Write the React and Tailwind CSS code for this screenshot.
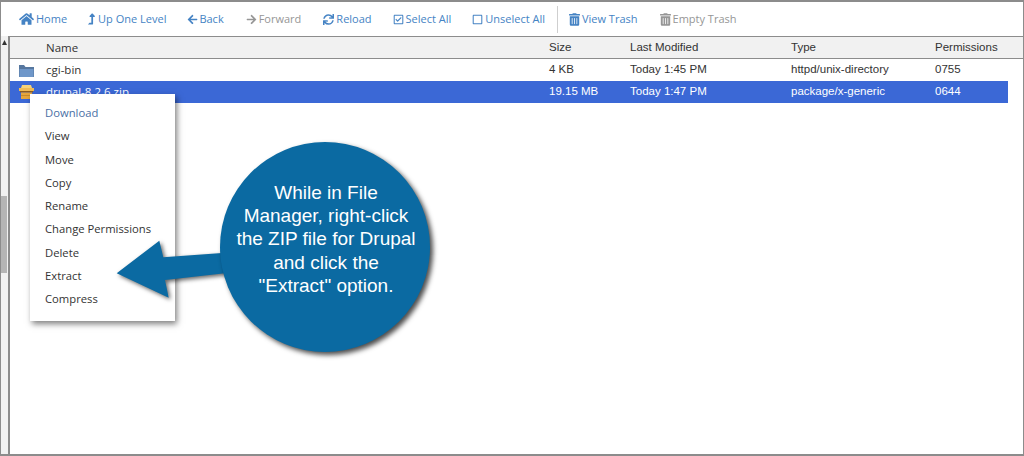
import { FaHome, FaLevelUpAlt, FaArrowLeft, FaArrowRight, FaSync, FaRegCheckSquare, FaRegSquare, FaTrashAlt } from 'react-icons/fa'

const TOOLS = [
  { label: 'Home', icon: FaHome, size: 'w-[15px] h-[14px]', ml: 'ml-[18px]', gap: 'gap-[2px]' },
  { label: 'Up One Level', icon: FaLevelUpAlt, size: 'w-[7px] h-[12px]', ml: 'ml-[21px]', gap: 'gap-[3px]' },
  { label: 'Back', icon: FaArrowLeft, size: 'w-[11px] h-[11px]', ml: 'ml-[21px]', gap: 'gap-[1px]' },
  { label: 'Forward', icon: FaArrowRight, size: 'w-[11px] h-[11px]', ml: 'ml-[22px]', gap: 'gap-[2px]', muted: true },
  { label: 'Reload', icon: FaSync, size: 'w-[11px] h-[11px]', ml: 'ml-[22px]', gap: 'gap-[2px]' },
  { label: 'Select All', icon: FaRegCheckSquare, size: 'w-[11px] h-[11px]', ml: 'ml-[21px]', gap: 'gap-[2px]' },
  { label: 'Unselect All', icon: FaRegSquare, size: 'w-[11px] h-[11px]', ml: 'ml-[21px]', gap: 'gap-[2px]' },
]

const MENU = ['Download', 'View', 'Move', 'Copy', 'Rename', 'Change Permissions', 'Delete', 'Extract', 'Compress']

function Tool({ label, icon: Icon, size, ml, gap, muted }) {
  return (
    <span className={`flex items-center ${gap} ${ml} ${muted ? 'text-[#969696]' : 'text-[#4583c4]'}`}>
      <Icon className={size} />
      <span>{label}</span>
    </span>
  )
}

function FolderIcon() {
  return (
    <svg width="15" height="14" viewBox="0 0 15 14">
      <path d="M0 1 L5 1 L6.5 3 L15 3 L15 13 L0 13 Z" fill="#56779f" />
      <rect x="0.5" y="5" width="14" height="8" fill="#6f97c9" />
    </svg>
  )
}

function PackageIcon() {
  return (
    <svg width="15" height="14" viewBox="0 0 15 14">
      <path d="M3 0 H12 L13 3 H2 Z" fill="#f6d27a" />
      <rect x="0" y="3" width="15" height="3" fill="#f0bb55" />
      <rect x="1" y="6" width="13" height="1.5" fill="#8a5a1e" />
      <rect x="2" y="7.5" width="11" height="6.5" fill="#e7a63c" />
      <rect x="2" y="10" width="11" height="1" fill="#c58a2c" />
    </svg>
  )
}

export default function App() {
  return (
    <div className="relative w-[1024px] h-[456px] overflow-hidden bg-white border-y-2 border-x border-[#8c8c8c] flex flex-col font-['Open_Sans',sans-serif]">
      <div className="h-[34px] shrink-0 flex items-center text-[11px]">
        {TOOLS.map(t => <Tool key={t.label} {...t} />)}
        <span className="w-px h-[27px] bg-[#cfcfcf] ml-[12px]" />
        <Tool label="View Trash" icon={FaTrashAlt} size="w-[11px] h-[13px]" ml="ml-[11px]" gap="gap-[2px]" />
        <Tool label="Empty Trash" icon={FaTrashAlt} size="w-[11px] h-[13px]" ml="ml-[22px]" gap="gap-[2px]" muted />
      </div>

      <div className="flex flex-1 min-h-0">
        <div className="w-[7px] shrink-0 bg-[#f1f1f1] flex flex-col">
          <svg className="mt-[4px] ml-[1px]" width="5" height="5" viewBox="0 0 5 5">
            <path d="M2.5 0 L5 5 L0 5 Z" fill="#333" />
          </svg>
          <div className="mt-[151px] w-[6px] h-[77px] bg-[#b5b5b5]" />
        </div>
        <div className="flex-1 border-l-2 border-[#8c8c8c] text-[11.5px] font-['Liberation_Sans',sans-serif] text-[#333]">
          <div className="flex items-center h-[23px] bg-[#f1f1f1] border-y border-[#8c8c8c]">
            <span className="w-[539px] pl-[36px] font-['Open_Sans',sans-serif] text-[11.5px]">Name</span>
            <span className="w-[81px]">Size</span>
            <span className="w-[161px]">Last Modified</span>
            <span className="w-[144px]">Type</span>
            <span>Permissions</span>
          </div>
          <div className="flex items-center h-[22px] w-[998px]">
            <span className="w-[36px] pl-[9px] pt-[2px] flex items-center"><FolderIcon /></span>
            <span className="w-[503px] font-['Open_Sans',sans-serif] text-[11.5px]">cgi-bin</span>
            <span className="w-[81px]">4 KB</span>
            <span className="w-[161px]">Today 1:45 PM</span>
            <span className="w-[144px]">httpd/unix-directory</span>
            <span>0755</span>
          </div>
          <div className="flex items-center h-[22px] w-[998px] bg-[#3b68d6] text-white">
            <span className="w-[36px] pl-[9px] flex items-center"><PackageIcon /></span>
            <span className="w-[503px] font-['Open_Sans',sans-serif] text-[11.5px]">drupal-8.2.6.zip</span>
            <span className="w-[81px]">19.15 MB</span>
            <span className="w-[161px]">Today 1:47 PM</span>
            <span className="w-[144px]">package/x-generic</span>
            <span>0644</span>
          </div>
        </div>
      </div>

      {/* right click menu */}
      <ul className="absolute left-[29px] top-[92px] w-[145px] h-[227px] pt-[7px] bg-white shadow-[2px_3px_6px_rgba(0,0,0,0.5)] text-[11.25px] text-[#333]">
        {MENU.map((m, i) => (
          <li key={m} className={`h-[23.3px] leading-[23.3px] pl-[15px] ${i === 0 ? 'text-[#4a6fa5]' : ''}`}>{m}</li>
        ))}
      </ul>

      {/* callout */}
      <svg className="absolute left-[99px] top-[222px]" width="140" height="90" viewBox="99 224 140 90">
        <path
          d="M115.7 273.3 L158.3 240.7 L162.3 257.3 L235 252 L235 272 L164 280 L167.7 297.7 Z"
          fill="#0b6aa2"
          style={{ filter: 'drop-shadow(2px 2px 2px rgba(0,0,0,0.6))' }}
        />
      </svg>
      <div className="absolute left-[219px] top-[140px] w-[210px] h-[210px] rounded-full bg-[#0b6aa2] shadow-[3px_3px_5px_rgba(0,0,0,0.7)] flex flex-col items-center justify-center text-white text-[19px] leading-[23.3px] text-center font-['Liberation_Sans',sans-serif] pb-[16px] pl-[2px]">
        <span>While in File</span>
        <span>Manager, right-click</span>
        <span>the ZIP file for Drupal</span>
        <span>and click the</span>
        <span>"Extract" option.</span>
      </div>
    </div>
  )
}
